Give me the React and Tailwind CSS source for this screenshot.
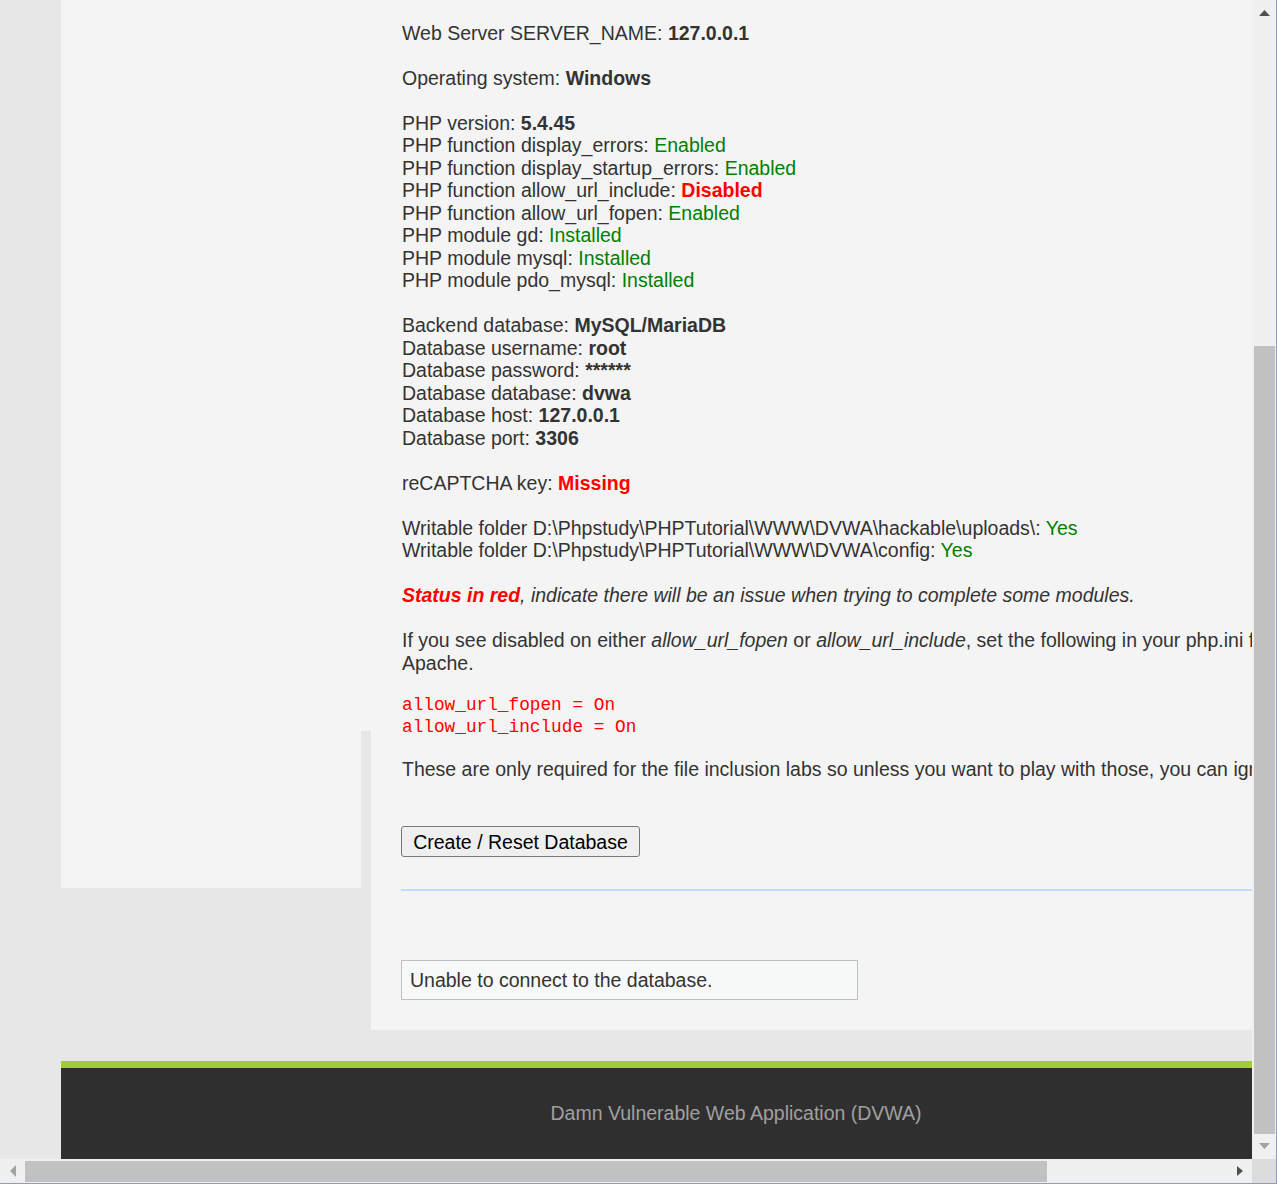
import React from 'react';

const ok = 'text-[#008000]';

const Line = ({ children }) => <div className="h-[22.5px] whitespace-nowrap">{children}</div>;
const Blank = () => <div className="h-[22.5px]" />;

const MainBody = () => {
  return (
    <div className="w-[1040px] h-[1030px] shrink-0 bg-[#f4f4f4] pl-[31px] pr-[30px] pt-[21.5px] text-[#333333] text-[19.5px] leading-[22.5px] font-['Liberation_Sans',Arial,sans-serif]">
      <Line>Web Server SERVER_NAME: <b>127.0.0.1</b></Line>
      <Blank />
      <Line>Operating system: <b>Windows</b></Line>
      <Blank />
      <Line>PHP version: <b>5.4.45</b></Line>
      <Line>PHP function display_errors: <span className={ok}>Enabled</span></Line>
      <Line>PHP function display_startup_errors: <span className={ok}>Enabled</span></Line>
      <Line>PHP function allow_url_include: <span className="text-[#ff0000] font-bold">Disabled</span></Line>
      <Line>PHP function allow_url_fopen: <span className={ok}>Enabled</span></Line>
      <Line>PHP module gd: <span className={ok}>Installed</span></Line>
      <Line>PHP module mysql: <span className={ok}>Installed</span></Line>
      <Line>PHP module pdo_mysql: <span className={ok}>Installed</span></Line>
      <Blank />
      <Line>Backend database: <b>MySQL/MariaDB</b></Line>
      <Line>Database username: <b>root</b></Line>
      <Line>Database password: <b>******</b></Line>
      <Line>Database database: <b>dvwa</b></Line>
      <Line>Database host: <b>127.0.0.1</b></Line>
      <Line>Database port: <b>3306</b></Line>
      <Blank />
      <Line>reCAPTCHA key: <span className="text-[#ff0000] font-bold">Missing</span></Line>
      <Blank />
      <Line>Writable folder D:\Phpstudy\PHPTutorial\WWW\DVWA\hackable\uploads\: <span className={ok}>Yes</span></Line>
      <Line>Writable folder D:\Phpstudy\PHPTutorial\WWW\DVWA\config: <span className={ok}>Yes</span></Line>
      <Blank />
      <Line>
        <i>
          <span className="text-[#ff0000] font-bold">Status in red</span>, indicate there will be an issue when trying to complete some modules.
        </i>
      </Line>
      <Blank />
      <p className="h-[45px]">
        If you see disabled on either <i>allow_url_fopen</i> or <i>allow_url_include</i>, set the following in your php.ini file and restart Apache.
      </p>

      <pre className="mt-[19.5px] text-[#ff0000] text-[17.75px] leading-[22px] font-['Liberation_Mono','Courier_New',monospace]">
        {'allow_url_fopen = On\nallow_url_include = On'}
      </pre>

      <p className="mt-[20.5px] whitespace-nowrap">
        These are only required for the file inclusion labs so unless you want to play with those, you can ignore them.
      </p>

      <button className="mt-[45.5px] -ml-[1px] h-[31px] w-[239px] border border-[#767676] rounded-[3px] bg-[#efefef] text-black text-[19.5px] leading-[22px]">
        Create / Reset Database
      </button>

      {/* linea separadora */}
      <div className="mt-[32px] -ml-[1px] h-[2px] bg-[#c4dafe]" />

      <div className="mt-[69px] -ml-[1px] w-[457px] h-[40px] border border-[#c0c0c0] bg-[#f7f8f8] pl-[8px] flex items-center">
        Unable to connect to the database.
      </div>
    </div>
  );
};

const App = () => {
  return (
    <div className="w-[1277px] h-[1184px] overflow-hidden flex flex-col border-r border-b border-[#8d9cc0] bg-[#f0f0f0]">
      <div className="flex h-[1159px]">
        {/* pagina */}
        <div className="w-[1252px] h-[1159px] overflow-hidden bg-[#e7e7e7]">
          <div className="ml-[61px] w-[1350px]">
            <div className="flex items-start">
              <div className="w-[300px] h-[888px] shrink-0 bg-[#f4f4f4]" />
              <div className="w-[10px] h-[731px] shrink-0 bg-[#f4f4f4]" />
              <MainBody />
            </div>
            <div className="h-[31px]" />
            <div className="h-[130px] border-t-[7px] border-[#a2cd32] bg-[#2f2f2f] pt-[34px] text-center text-[#a0a0a0] text-[19.5px] leading-[22.5px] font-['Liberation_Sans',Arial,sans-serif]">
              Damn Vulnerable Web Application (DVWA)
            </div>
          </div>
        </div>

        {/* scrollbar vertical */}
        <div className="w-[24px] h-[1159px] bg-[#f0f0f0] flex flex-col items-center">
          <div className="h-[346px] w-full flex justify-center pt-[10px]">
            <svg width="11" height="6" viewBox="0 0 11 6">
              <polygon points="5.5,0 11,6 0,6" fill="#505050" />
            </svg>
          </div>
          <div className="w-[21px] h-[788px] bg-[#c1c1c1] ml-[2px] self-start" />
          <div className="w-full flex justify-center pt-[9px]">
            <svg width="11" height="6" viewBox="0 0 11 6">
              <polygon points="0,0 11,0 5.5,6" fill="#a3a3a3" />
            </svg>
          </div>
        </div>
      </div>

      <div className="flex h-[24px]">
        {/* scrollbar horizontal */}
        <div className="w-[1252px] h-[24px] bg-[#f0f0f0] flex items-center">
          <div className="w-[25px] flex justify-center">
            <svg width="6" height="12" viewBox="0 0 6 12">
              <polygon points="6,0 6,12 0,6" fill="#a3a3a3" />
            </svg>
          </div>
          <div className="w-[1022px] h-[21px] bg-[#c1c1c1]" />
          <div className="flex-1 flex justify-end pr-[9px]">
            <svg width="6" height="10" viewBox="0 0 6 10">
              <polygon points="0,0 6,5 0,10" fill="#505050" />
            </svg>
          </div>
        </div>
        <div className="w-[24px] h-[24px] bg-[#dcdcdc]" />
      </div>
    </div>
  );
};

export default App;
